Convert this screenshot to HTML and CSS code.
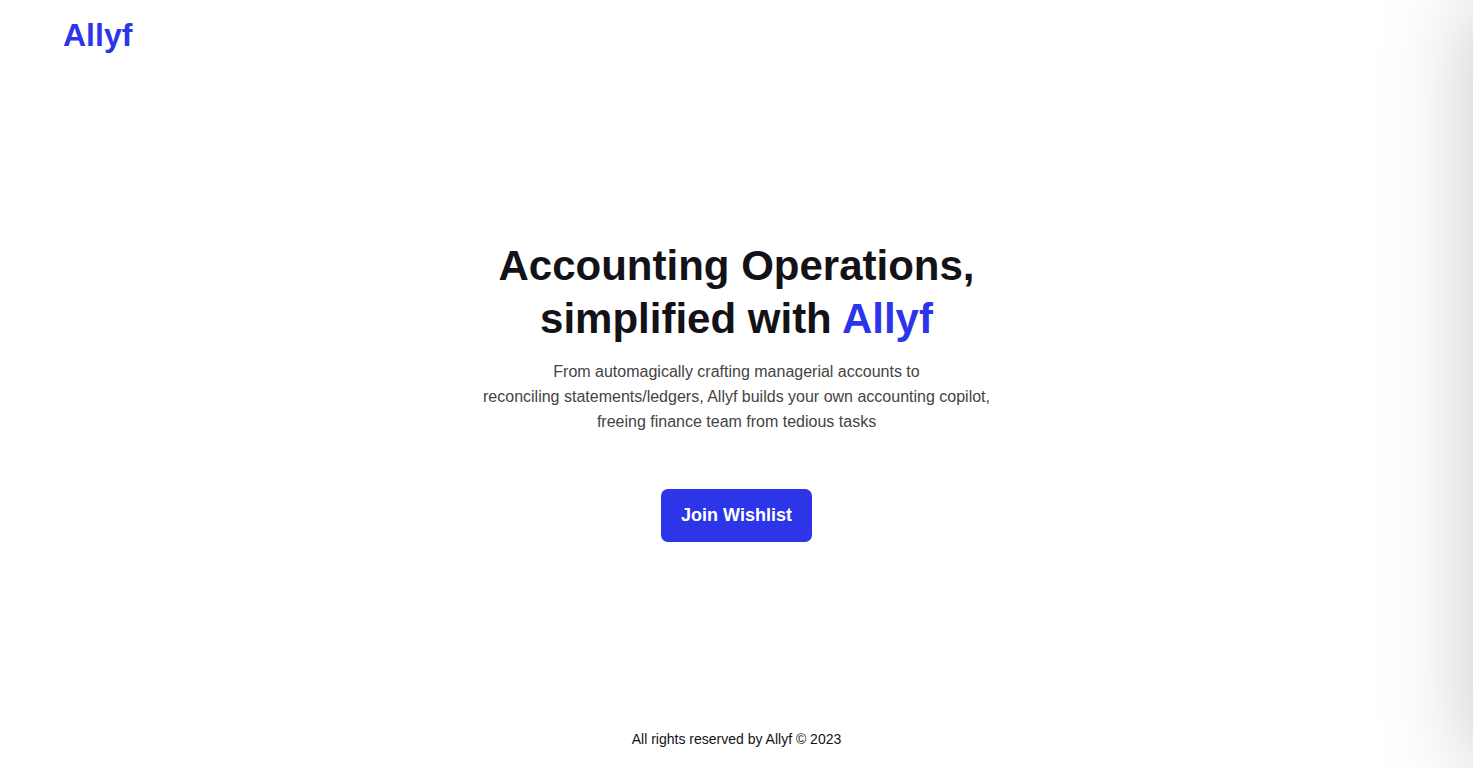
FILE: index.html
```html
<!DOCTYPE html>
<html lang="en">
<head>
    <meta charset="UTF-8">
    <meta name="viewport" content="width=device-width, initial-scale=1.0">
    <title>Allyf</title>
    <link rel="stylesheet" href="styles.css">
</head>
<body>
    <header class="navbar">
        <a class="logo" href="#">Allyf</a>
    </header>

    <main class="hero">
        <h1>Accounting Operations,<br>simplified with <span class="brand">Allyf</span></h1>
        <p class="tagline">
            From automagically crafting managerial accounts to<br>
            reconciling statements/ledgers, Allyf builds your own accounting copilot,<br>
            freeing finance team from tedious tasks
        </p>
        <button class="join-btn" type="button">Join Wishlist</button>
    </main>

    <footer class="footer">All rights reserved by Allyf © 2023</footer>

    <!-- side panel, closed: only its shadow shows at the edge -->
    <aside class="drawer"></aside>
</body>
</html>
```

FILE: styles.css
```css
* {
    box-sizing: border-box;
}

body {
    font-family: "Liberation Sans", Arial, sans-serif;
    background-color: #ffffff;
    color: #121217;
    margin: 0;
    min-height: 100vh;
    display: flex;
    flex-direction: column;
    overflow-x: hidden;
}

.navbar {
    padding: 16px 63px;
}

.logo {
    color: #2d35e8;
    font-size: 32px;
    font-weight: bold;
    line-height: 38px;
    text-decoration: none;
}

.hero {
    flex: 1;
    display: flex;
    flex-direction: column;
    align-items: center;
    justify-content: center;
    text-align: center;
}

h1 {
    margin: 0;
    font-size: 42px;
    line-height: 53px;
}

.brand {
    color: #2d35e8;
}

.tagline {
    margin: 14px 0 55px;
    color: #444444;
    font-size: 16px;
    line-height: 25px;
}

.join-btn {
    background-color: #2d35e8;
    color: #ffffff;
    border: none;
    border-radius: 7px;
    padding: 16px 20px;
    font-family: inherit;
    font-size: 18px;
    font-weight: bold;
    line-height: 21px;
    cursor: pointer;
}

.footer {
    padding: 17px;
    text-align: center;
    font-size: 14px;
    line-height: 24px;
}

.drawer {
    position: fixed;
    top: 0;
    bottom: 0;
    left: 100%;
    width: 320px;
    box-shadow: 0 0 88px rgba(0, 0, 0, 0.22);
}
```
